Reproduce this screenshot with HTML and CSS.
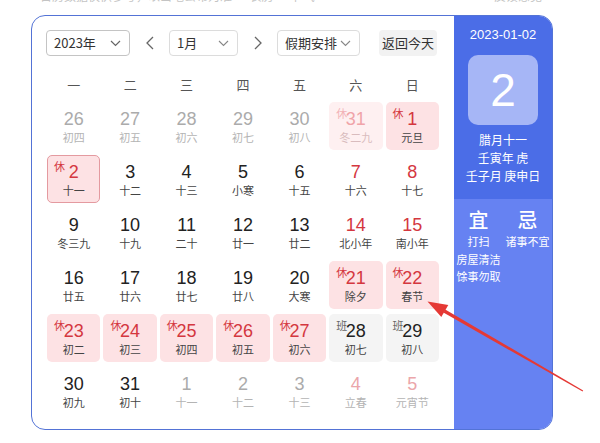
FILE: index.html
```html
<!DOCTYPE html>
<html lang="zh-CN">
<head>
<meta charset="utf-8">
<link rel="stylesheet" href="styles.css">
</head>
<body>
<div class="topbar"><span class="hint">日历数据仅供参考，以当地公布为准 · 农历 · 节气</span><span class="hint hint-r">· 反馈意见</span></div>
<div class="card">
  <div class="main">
    <div class="toolbar">
      <div class="select sel-year"><span>2023年</span><svg class="chev" width="11" height="7" viewBox="0 0 11 7"><polyline points="1,1 5.5,5.5 10,1" fill="none" stroke="#666" stroke-width="1.2"/></svg></div>
      <div class="nav"><svg width="8" height="14" viewBox="0 0 8 14"><polyline points="7,1 1,7 7,13" fill="none" stroke="#666" stroke-width="1.3"/></svg></div>
      <div class="select sel-month"><span>1月</span><svg class="chev" width="11" height="7" viewBox="0 0 11 7"><polyline points="1,1 5.5,5.5 10,1" fill="none" stroke="#888" stroke-width="1.1"/></svg></div>
      <div class="nav"><svg width="8" height="14" viewBox="0 0 8 14"><polyline points="1,1 7,7 1,13" fill="none" stroke="#666" stroke-width="1.3"/></svg></div>
      <div class="select sel-holiday"><span>假期安排</span><svg class="chev" width="11" height="7" viewBox="0 0 11 7"><polyline points="1,1 5.5,5.5 10,1" fill="none" stroke="#888" stroke-width="1.1"/></svg></div>
      <div class="today">返回今天</div>
    </div>
    <div class="weekdays">
      <div>一</div><div>二</div><div>三</div><div>四</div><div>五</div><div>六</div><div>日</div>
    </div>
    <div class="days">
      <div class="cell other"><div class="num">26</div><div class="lunar">初四</div></div>
      <div class="cell other"><div class="num">27</div><div class="lunar">初五</div></div>
      <div class="cell other"><div class="num">28</div><div class="lunar">初六</div></div>
      <div class="cell other"><div class="num">29</div><div class="lunar">初七</div></div>
      <div class="cell other"><div class="num">30</div><div class="lunar">初八</div></div>
      <div class="cell other hol"><span class="badge">休</span><div class="num">31</div><div class="lunar">冬二九</div></div>
      <div class="cell hol"><span class="badge">休</span><div class="num">1</div><div class="lunar">元旦</div></div>

      <div class="cell hol selected"><span class="badge">休</span><div class="num">2</div><div class="lunar">十一</div></div>
      <div class="cell"><div class="num">3</div><div class="lunar">十二</div></div>
      <div class="cell"><div class="num">4</div><div class="lunar">十三</div></div>
      <div class="cell"><div class="num">5</div><div class="lunar">小寒</div></div>
      <div class="cell"><div class="num">6</div><div class="lunar">十五</div></div>
      <div class="cell we"><div class="num">7</div><div class="lunar">十六</div></div>
      <div class="cell we"><div class="num">8</div><div class="lunar">十七</div></div>

      <div class="cell"><div class="num">9</div><div class="lunar">冬三九</div></div>
      <div class="cell"><div class="num">10</div><div class="lunar">十九</div></div>
      <div class="cell"><div class="num">11</div><div class="lunar">二十</div></div>
      <div class="cell"><div class="num">12</div><div class="lunar">廿一</div></div>
      <div class="cell"><div class="num">13</div><div class="lunar">廿二</div></div>
      <div class="cell we"><div class="num">14</div><div class="lunar">北小年</div></div>
      <div class="cell we"><div class="num">15</div><div class="lunar">南小年</div></div>

      <div class="cell"><div class="num">16</div><div class="lunar">廿五</div></div>
      <div class="cell"><div class="num">17</div><div class="lunar">廿六</div></div>
      <div class="cell"><div class="num">18</div><div class="lunar">廿七</div></div>
      <div class="cell"><div class="num">19</div><div class="lunar">廿八</div></div>
      <div class="cell"><div class="num">20</div><div class="lunar">大寒</div></div>
      <div class="cell hol"><span class="badge">休</span><div class="num">21</div><div class="lunar">除夕</div></div>
      <div class="cell hol"><span class="badge">休</span><div class="num">22</div><div class="lunar">春节</div></div>

      <div class="cell hol"><span class="badge">休</span><div class="num">23</div><div class="lunar">初二</div></div>
      <div class="cell hol"><span class="badge">休</span><div class="num">24</div><div class="lunar">初三</div></div>
      <div class="cell hol"><span class="badge">休</span><div class="num">25</div><div class="lunar">初四</div></div>
      <div class="cell hol"><span class="badge">休</span><div class="num">26</div><div class="lunar">初五</div></div>
      <div class="cell hol"><span class="badge">休</span><div class="num">27</div><div class="lunar">初六</div></div>
      <div class="cell work"><span class="badge">班</span><div class="num">28</div><div class="lunar">初七</div></div>
      <div class="cell work"><span class="badge">班</span><div class="num">29</div><div class="lunar">初八</div></div>

      <div class="cell"><div class="num">30</div><div class="lunar">初九</div></div>
      <div class="cell"><div class="num">31</div><div class="lunar">初十</div></div>
      <div class="cell other"><div class="num">1</div><div class="lunar">十一</div></div>
      <div class="cell other"><div class="num">2</div><div class="lunar">十二</div></div>
      <div class="cell other"><div class="num">3</div><div class="lunar">十三</div></div>
      <div class="cell other we"><div class="num">4</div><div class="lunar">立春</div></div>
      <div class="cell other we"><div class="num">5</div><div class="lunar">元宵节</div></div>
    </div>
  </div>
  <div class="side">
    <div class="side-top">
      <div class="side-date">2023-01-02</div>
      <div class="bigday">2</div>
      <div class="side-line">腊月十一</div>
      <div class="side-line">壬寅年 虎</div>
      <div class="side-line">壬子月 庚申日</div>
    </div>
    <div class="side-bottom">
      <div class="yj">
        <div class="yj-head">宜</div>
        <div class="yj-item">打扫</div>
        <div class="yj-item">房屋清洁</div>
        <div class="yj-item">馀事勿取</div>
      </div>
      <div class="yj">
        <div class="yj-head">忌</div>
        <div class="yj-item">诸事不宜</div>
      </div>
    </div>
  </div>
</div>
<svg class="arrow" width="600" height="443" viewBox="0 0 600 443">
  <polygon points="445.2,309.4 583.2,390.6 582.6,391.6 443.4,312.6" fill="#e53935"/>
  <polygon points="427.5,301.5 448.3,304.9 441.3,317.1" fill="#e53935"/>
</svg>
</body>
</html>
```
FILE: styles.css
```css
* { box-sizing: border-box; }
html, body { margin: 0; padding: 0; background: #fff; }
body {
  width: 600px;
  height: 443px;
  overflow: hidden;
  position: relative;
  font-family: "Liberation Sans", "Noto Sans CJK SC", sans-serif;
  color: #222;
}
.topbar {
  height: 15px;
  overflow: hidden;
  display: flex;
  justify-content: space-between;
  padding: 0 58px 0 40px;
}
.hint {
  display: block;
  font-size: 12px;
  line-height: 14px;
  margin-top: -11px;
  color: #c4c4c4;
  font-family: "Noto Sans CJK SC", sans-serif;
}
.card {
  margin-left: 31px;
  width: 522px;
  height: 415px;
  border: 1px solid #5373d6;
  border-radius: 14px;
  overflow: hidden;
  display: flex;
  background: #fff;
}
.main {
  width: 422px;
  padding: 14px 15px 0 15px;
}
.toolbar {
  display: flex;
  align-items: center;
  height: 26px;
  margin-left: -1px;
  font-family: "Noto Sans CJK SC", sans-serif;
}
.select {
  height: 26px;
  border: 1px solid #dcdcdc;
  border-radius: 4px;
  display: flex;
  align-items: center;
  justify-content: space-between;
  padding: 0 8px 0 7px;
  font-size: 13px;
  color: #333;
  background: #fff;
}
.select span { line-height: 24px; }
.sel-year { width: 84px; border-color: #c4c4c4; }
.sel-month { width: 69px; }
.sel-holiday { width: 83px; }
.nav {
  width: 39px;
  height: 26px;
  display: flex;
  align-items: center;
  justify-content: center;
}
.today {
  margin-left: 19px;
  width: 58px;
  height: 26px;
  line-height: 26px;
  text-align: center;
  background: #f2f2f2;
  border-radius: 4px;
  font-size: 13px;
  color: #333;
}
.weekdays {
  margin-top: 14px;
  height: 30px;
  display: grid;
  grid-template-columns: repeat(7, 1fr);
  column-gap: 3px;
  font-family: "Noto Sans CJK SC", sans-serif;
  font-size: 13px;
  line-height: 30px;
  color: #555;
  text-align: center;
}
.days {
  margin-top: 2px;
  display: grid;
  grid-template-columns: repeat(7, 1fr);
  grid-auto-rows: 48px;
  column-gap: 3px;
  row-gap: 5px;
}
.cell {
  position: relative;
  border-radius: 5px;
  text-align: center;
  padding-top: 6px;
  border: 1px solid transparent;
}
.num {
  font-size: 18px;
  line-height: 22px;
  margin-top: -1px;
  color: #222;
}
.lunar {
  font-family: "Noto Sans CJK SC", sans-serif;
  font-size: 11px;
  line-height: 14px;
  color: #444;
}
.badge {
  position: absolute;
  left: 6px;
  top: 4px;
  font-family: "Noto Sans CJK SC", sans-serif;
  font-size: 11px;
  line-height: 13px;
  color: #d4373f;
}
.we .num { color: #d4373f; }
.hol { background: #fde2e4; }
.hol .num { color: #d4373f; }
.selected { border-color: #e49aa0; }
.work { background: #f4f4f4; }
.work .badge { color: #666; }
.other .num { color: #ababab; }
.other .lunar { color: #b4b4b4; }
.other.we .num { color: #eba6aa; }
.other.hol { background: #fef0f1; }
.other.hol .num { color: #f0a4a9; }
.other.hol .badge { color: #f2b3b7; }
.other.hol .lunar { color: #d9bcbe; }

.side {
  width: 98px;
  display: flex;
  flex-direction: column;
  color: #fff;
  font-family: "Noto Sans CJK SC", sans-serif;
  text-align: center;
}
.side-top {
  background: #4b6de7;
  padding: 11px 0 13px 0;
  height: 183px;
}
.side-date {
  font-family: "Liberation Sans", sans-serif;
  font-size: 13px;
  line-height: 16px;
}
.bigday {
  width: 70px;
  height: 70px;
  margin: 12px auto 0;
  background: #a6b6f6;
  border-radius: 10px;
  font-family: "Liberation Sans", sans-serif;
  font-size: 46px;
  line-height: 70px;
  color: #fff;
}
.side-line {
  font-size: 12px;
  line-height: 18px;
}
.bigday + .side-line { margin-top: 6px; }
.side-bottom {
  flex: 1;
  background: #6682f2;
  display: flex;
  padding-top: 8px;
}
.yj { width: 50%; }
.yj-head {
  font-size: 20px;
  line-height: 26px;
  font-weight: 500;
}
.yj-item {
  font-size: 11px;
  line-height: 17.5px;
}
.arrow {
  position: absolute;
  left: 0;
  top: 0;
  pointer-events: none;
}
```
